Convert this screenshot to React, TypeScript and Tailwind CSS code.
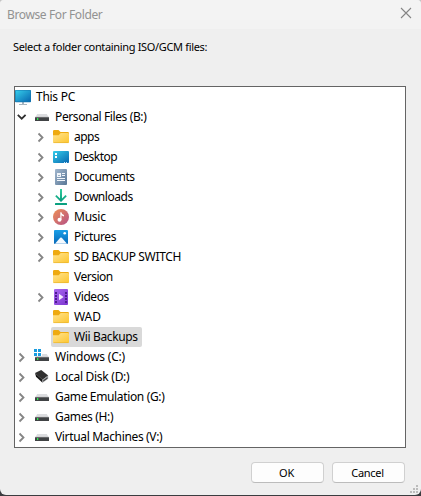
import React from "react";

type IconName = "pc" | "drive" | "folder" | "desktop" | "document" | "download" | "music" | "picture" | "video" | "windows" | "disk";

interface Item {
  label: string;
  icon: IconName;
  depth: number;
  state?: "open" | "closed";
  selected?: boolean;
  tracking: string;
}

const items: Item[] = [
  { label: "This PC", icon: "pc", depth: 0, tracking: "tracking-[-0.28px]" },
  { label: "Personal Files (B:)", icon: "drive", depth: 1, state: "open", tracking: "tracking-[-0.38px]" },
  { label: "apps", icon: "folder", depth: 2, state: "closed", tracking: "tracking-[-0.5px]" },
  { label: "Desktop", icon: "desktop", depth: 2, state: "closed", tracking: "tracking-[-0.5px]" },
  { label: "Documents", icon: "document", depth: 2, state: "closed", tracking: "tracking-[-0.45px]" },
  { label: "Downloads", icon: "download", depth: 2, state: "closed", tracking: "tracking-[-0.45px]" },
  { label: "Music", icon: "music", depth: 2, state: "closed", tracking: "tracking-[-0.25px]" },
  { label: "Pictures", icon: "picture", depth: 2, state: "closed", tracking: "tracking-[-0.38px]" },
  { label: "SD BACKUP SWITCH", icon: "folder", depth: 2, state: "closed", tracking: "tracking-[-0.35px]" },
  { label: "Version", icon: "folder", depth: 2, tracking: "tracking-[-0.5px]" },
  { label: "Videos", icon: "video", depth: 2, state: "closed", tracking: "tracking-[-0.45px]" },
  { label: "WAD", icon: "folder", depth: 2, tracking: "tracking-[-0.1px]" },
  { label: "Wii Backups", icon: "folder", depth: 2, selected: true, tracking: "tracking-[-0.36px]" },
  { label: "Windows (C:)", icon: "windows", depth: 1, state: "closed", tracking: "tracking-[-0.2px]" },
  { label: "Local Disk (D:)", icon: "disk", depth: 1, state: "closed", tracking: "tracking-[-0.28px]" },
  { label: "Game Emulation (G:)", icon: "drive", depth: 1, state: "closed", tracking: "tracking-[-0.35px]" },
  { label: "Games (H:)", icon: "drive", depth: 1, state: "closed", tracking: "tracking-[-0.35px]" },
  { label: "Virtual Machines (V:)", icon: "drive", depth: 1, state: "closed", tracking: "tracking-[-0.34px]" },
];

function Gradients() {
  return (
    <svg className="absolute size-0" aria-hidden="true">
      <defs>
        <linearGradient id="screen" x1="0" y1="0" x2="1" y2="1">
          <stop offset="0" stopColor="#35cdea" />
          <stop offset="1" stopColor="#0867b0" />
        </linearGradient>
        <linearGradient id="yellow" x1="0" y1="0" x2="1" y2="1">
          <stop offset="0" stopColor="#ffe391" />
          <stop offset="1" stopColor="#fdc62f" />
        </linearGradient>
        <linearGradient id="paper" x1="0" y1="0" x2="1" y2="1">
          <stop offset="0" stopColor="#a3b8cf" />
          <stop offset="1" stopColor="#597796" />
        </linearGradient>
        <linearGradient id="green" x1="0" y1="0" x2="0" y2="1">
          <stop offset="0" stopColor="#30cf9e" />
          <stop offset="1" stopColor="#079a7c" />
        </linearGradient>
        <linearGradient id="coral" x1="0" y1="0" x2="1" y2="1">
          <stop offset="0" stopColor="#ef9155" />
          <stop offset="1" stopColor="#b45087" />
        </linearGradient>
        <linearGradient id="azure" x1="0" y1="0" x2="0" y2="1">
          <stop offset="0" stopColor="#1ba0e8" />
          <stop offset="1" stopColor="#0668b8" />
        </linearGradient>
        <linearGradient id="violet" x1="0" y1="0" x2="1" y2="1">
          <stop offset="0" stopColor="#a968f0" />
          <stop offset="1" stopColor="#7c35cf" />
        </linearGradient>
      </defs>
    </svg>
  );
}

function Drive() {
  return (
    <>
      <path d="M3.2 5H12.8L14.8 8.5H1.2Z" fill="#dcdde0" />
      <rect x="1" y="8" width="14" height="4" rx=".6" fill="#414345" />
      <path d="M1 8.4H15" stroke="#77797b" strokeWidth=".8" />
      <rect x="3" y="9" width="1.3" height="2" fill="#28ec4c" />
    </>
  );
}

const drawings: Record<IconName, React.ReactNode> = {
  pc: (
    <>
      <path d="M7 13H9V15H12V16H4V15H7Z" fill="#a7b5bf" />
      <rect x="0" y="1" width="16" height="12.3" rx=".8" fill="#1576ae" />
      <rect x=".6" y="1.6" width="14.8" height="11" rx=".3" fill="url(#screen)" />
    </>
  ),
  drive: <Drive />,
  folder: (
    <>
      <path d="M0 2.2Q0 1 1.2 1H5.5L7.5 3H14.8Q16 3 16 4.2V8H0Z" fill="#eeaa10" />
      <path d="M0 6.2H5.7L7.7 4H14.8Q16 4 16 5V13Q16 14 15 14H1Q0 14 0 13Z" fill="url(#yellow)" />
      <path d="M.5 13.6H15.5" stroke="#e9b52e" strokeWidth=".7" />
    </>
  ),
  desktop: (
    <>
      <rect x="0" y="2" width="16" height="12" rx="1" fill="url(#screen)" />
      <path d="M2 4H4V6H2ZM2 7H4V9H2Z" fill="#fff" />
      <path d="M11 13H12V14H11ZM13 13H14V14H13Z" fill="#c9e8fa" />
    </>
  ),
  document: (
    <>
      <rect x="2" y="0" width="12" height="16" rx="1" fill="url(#paper)" />
      <path d="M4 4H8V8H4ZM9 4H12V5H9ZM9 6H12V7H9ZM4 9H12V10H4ZM4 11H12V12H4Z" fill="#f1f5fa" />
      <path d="M5 6.2H7V7H5Z" fill="#829bb3" />
    </>
  ),
  download: (
    <>
      <path d="M7 0H9V9.4L12.5 6L13.8 7.3L8 13L2.2 7.3L3.5 6L7 9.4Z" fill="url(#green)" />
      <rect x="2" y="14" width="12" height="2" rx=".5" fill="#0ba080" />
    </>
  ),
  music: (
    <>
      <circle cx="8" cy="8" r="8" fill="url(#coral)" />
      <circle cx="6.5" cy="10.7" r="2" fill="#fff" />
      <path d="M7.3 3.2H8.4Q8.8 5.5 11 6V7.4Q9.4 7.2 8.5 6.2V10.7H7.3Z" fill="#fff" />
    </>
  ),
  picture: (
    <>
      <rect x="1" y="1" width="14" height="14" rx="1" fill="url(#azure)" />
      <path d="M2 14.8L7.2 8.8Q8 8 8.8 8.8L14 14.8Z" fill="#f5faff" />
      <circle cx="11.7" cy="4.3" r="1.3" fill="#fff" />
    </>
  ),
  video: (
    <>
      <rect x="1" y="0" width="14" height="16" rx="1" fill="url(#violet)" />
      <path d="M2 3H4V5H2ZM2 6H4V8H2ZM2 9H4V11H2ZM2 12H4V14H2ZM12 3H14V5H12ZM12 6H14V8H12ZM12 9H14V11H12ZM12 12H14V14H12Z" fill="#4e1c92" />
      <path d="M6 4.8L10.6 8L6 11.2Z" fill="#f2eafc" />
    </>
  ),
  windows: (
    <>
      <Drive />
      <path d="M0 0H8V7H0Z" fill="#fff" />
      <path d="M0 0H3V3H0ZM4 0H7V3H4ZM0 4H3V7H0ZM4 4H7V7H4Z" fill="#189ce0" />
    </>
  ),
  disk: (
    <>
      <path d="M1 4L7.2 1L14.2 6.5L8.5 10.7Z" fill="#303030" />
      <path d="M1 4L8.5 10.7V13.8L2 7.8Z" fill="#171717" />
      <path d="M8.5 10.7L14.2 6.5V9.7L8.5 13.8Z" fill="#96989b" />
      <path d="M9.4 11.3L13.4 8.4V9.5L9.4 12.4Z" fill="#333" />
    </>
  ),
};

function Chevron({ state }: { state?: "open" | "closed" }) {
  return (
    <svg className="h-5 w-[19px] shrink-0" viewBox="0 0 19 20" fill="none">
      {state === "open" && <path d="M2.8 7.8L6.7 11.7L10.6 7.8" stroke="#303030" strokeWidth="1.8" />}
      {state === "closed" && <path d="M4.5 6.5L8.5 10.5L4.5 14.5" stroke="#858585" strokeWidth="1.8" />}
    </svg>
  );
}

function Row({ item }: { item: Item }) {
  return (
    <div className="flex h-5 items-center">
      {item.depth === 2 && <span className="w-[19px] shrink-0" />}
      {item.depth > 0 && <Chevron state={item.state} />}
      <div className={`flex h-5 items-center rounded-[2px] ${item.selected ? "-ml-0.5 bg-[#d9d9d9] pr-1 pl-0.5" : ""}`}>
        <svg className="size-4 shrink-0" viewBox="0 0 16 16">{drawings[item.icon]}</svg>
        <span className={`ml-[5px] whitespace-nowrap ${item.tracking}`}>{item.label}</span>
      </div>
    </div>
  );
}

function DialogButton({ children }: { children: React.ReactNode }) {
  return (
    <button className="h-[21px] w-[73px] rounded-[4px] border border-[#d0d0d0] border-b-[#bcbcbc] bg-[#fdfdfd] pr-0.5 text-[11px] leading-[18px] tracking-[-0.3px]">
      {children}
    </button>
  );
}

export default function App() {
  return (
    <div className="relative h-[496px] w-[421px] overflow-hidden bg-linear-to-b from-[#c4c4c4] from-10% to-[#3b3d40] to-90% font-['Noto_Sans','Open_Sans',sans-serif] text-xs text-black">
      <Gradients />
      <div className="flex h-[495px] flex-col overflow-hidden rounded-t-[4px] rounded-b-[6px] bg-[#efefef]">
        <header className="flex h-[29px] shrink-0 items-center justify-between bg-[#f3f3f3] pr-[9px] pl-[7px] text-[#929292]">
          <h1 className="text-xs tracking-[-0.38px]">Browse For Folder</h1>
          <svg className="-mt-[3px] size-3" viewBox="0 0 12 12"><path d="M1 1L11 11M11 1L1 11" stroke="#858585" strokeWidth="1.1" /></svg>
        </header>
        <p className="mt-[9px] ml-[13px] h-[18px] text-[11px] leading-[18px] tracking-[-0.34px] whitespace-nowrap">Select a folder containing ISO/GCM files:</p>
        <main className="mt-[30px] ml-3.5 h-[362px] w-[392px] shrink-0 border border-[#646464] bg-white">
          {items.map((item) => <Row key={item.label} item={item} />)}
        </main>
        <footer className="mt-3.5 mr-4 flex justify-end gap-2">
          <DialogButton>OK</DialogButton>
          <DialogButton>Cancel</DialogButton>
        </footer>
      </div>
      <svg className="absolute right-[3px] bottom-[3px] size-2" viewBox="0 0 8 8" fill="#bcbcbc">
        <path d="M6 0H8V2H6ZM3 3H5V5H3ZM6 3H8V5H6ZM0 6H2V8H0ZM3 6H5V8H3ZM6 6H8V8H6Z" />
      </svg>
    </div>
  );
}
